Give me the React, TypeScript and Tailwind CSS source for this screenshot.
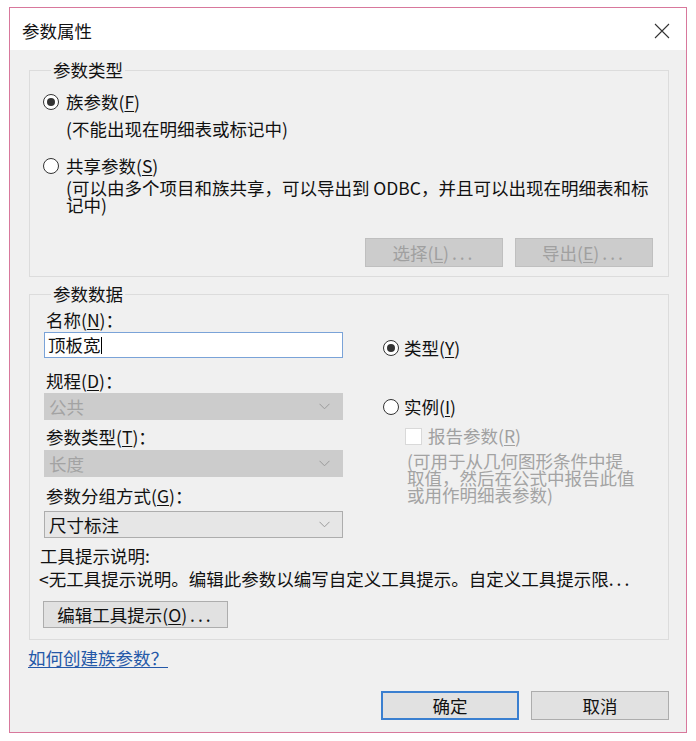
import React from 'react';

const Mn = ({ k }: { k: string }) => (
  <>
    (<span className="underline underline-offset-2">{k}</span>)
  </>
);

function Radio({ checked }: { checked?: boolean }) {
  return (
    <span className="w-[16px] h-[16px] rounded-full border-[1.5px] border-[#333] bg-white flex items-center justify-center shrink-0">
      {checked && <span className="w-[8px] h-[8px] rounded-full bg-[#333]" />}
    </span>
  );
}

function Chevron() {
  return (
    <svg width="11" height="7" viewBox="0 0 11 7" className="shrink-0">
      <path d="M0.5 0.8 L5.5 5.8 L10.5 0.8" fill="none" stroke="#9a9a9a" strokeWidth="1" />
    </svg>
  );
}

function Select({ value, disabled, className = '' }: { value: string; disabled?: boolean; className?: string }) {
  return (
    <div
      className={
        'h-[27px] w-[299px] flex items-center justify-between pl-[4px] pr-[12px] border ' +
        (disabled ? 'bg-[#cccccc] border-[#cccccc] text-[#a3a3a3] ' : 'bg-[#e6e6e6] border-[#adadad] text-[#111] ') +
        className
      }
    >
      <span>{value}</span>
      <Chevron />
    </div>
  );
}

export default function App() {
  return (
    <div className="w-[696px] h-[741px] bg-white pt-[7px] pl-[9px] font-['Noto_Sans_CJK_SC',sans-serif] text-[17.5px] leading-5 text-[#111]">
      <div className="w-[678px] h-[726px] border border-[#d8789c] flex flex-col">
        {/* Title bar */}
        <div className="h-[42px] bg-white flex items-center justify-between pl-[12px] pr-[16px] pt-[3px]">
          <span>参数属性</span>
          <svg width="16" height="16" viewBox="0 0 16 16">
            <path d="M1 1 L15 15 M15 1 L1 15" stroke="#333" strokeWidth="1.1" fill="none" />
          </svg>
        </div>

        {/* Body */}
        <div className="flex-1 bg-[#f0f0f0] pt-[10px] pl-[19px] pr-[17px] pb-[12px] flex flex-col">
          {/* 参数类型 */}
          <fieldset className="border border-[#dcdcdc] pl-[14px] pr-[15px] pt-[12px] pb-[9px]">
            <legend className="ml-[7px] px-[2px] leading-5">参数类型</legend>
            <div className="flex items-center gap-[7px] -ml-[1px] h-5">
              <Radio checked />
              <span>族参数<Mn k="F" /></span>
            </div>
            <div className="mt-[8px] ml-[22px] leading-[17px]">(不能出现在明细表或标记中)</div>
            <div className="mt-[19px] flex items-center gap-[7px] -ml-[1px] h-5">
              <Radio />
              <span>共享参数<Mn k="S" /></span>
            </div>
            <div className="mt-[3px] ml-[22px] leading-[17px] whitespace-nowrap">
              (可以由多个项目和族共享，可以导出到 ODBC，并且可以出现在明细表和标
              <br />
              记中)
            </div>
            <div className="mt-[25px] flex justify-end gap-[12px]">
              <div className="w-[138px] h-[29px] bg-[#cccccc] border border-[#bfbfbf] flex items-center justify-center text-[#a0a0a0]">
                选择<Mn k="L" /><span className="tracking-[3px] ml-[3px]">...</span>
              </div>
              <div className="w-[138px] h-[29px] bg-[#cccccc] border border-[#bfbfbf] flex items-center justify-center text-[#a0a0a0]">
                导出<Mn k="E" /><span className="tracking-[3px] ml-[3px]">...</span>
              </div>
            </div>
          </fieldset>

          {/* 参数数据 */}
          <fieldset className="mt-[7px] border border-[#dcdcdc] pl-[14px] pr-[15px] pt-[6px] pb-[11px]">
            <legend className="ml-[7px] px-[2px] leading-5">参数数据</legend>
            <div className="flex gap-[40px]">
              <div className="w-[299px] flex flex-col">
                <div className="h-5 pl-[2px]">名称<Mn k="N" />：</div>
                <div className="mt-[2px] h-[26px] bg-white border border-[#7aa3d8] flex items-center pl-[3px]">
                  <span>顶板宽</span>
                  <span className="w-px h-[17px] bg-[#000]" />
                </div>
                <div className="mt-[13px] h-5 pl-[2px]">规程<Mn k="D" />：</div>
                <Select className="mt-[2px]" value="公共" disabled />
                <div className="mt-[7px] h-5 pl-[2px]">参数类型<Mn k="T" />：</div>
                <Select className="mt-[3px]" value="长度" disabled />
                <div className="mt-[9px] h-5 pl-[2px]">参数分组方式<Mn k="G" />：</div>
                <Select className="mt-[5px]" value="尺寸标注" />
              </div>
              <div className="flex flex-col">
                <div className="mt-[28px] flex items-center gap-[5px] h-5">
                  <Radio checked />
                  <span>类型<Mn k="Y" /></span>
                </div>
                <div className="mt-[39px] flex items-center gap-[5px] h-5">
                  <Radio />
                  <span>实例<Mn k="I" /></span>
                </div>
                <div className="mt-[10px] ml-[22px] flex items-center gap-[6px] h-[18px] text-[#a0a0a0]">
                  <span className="w-[17px] h-[17px] bg-white border border-[#d9d9d9]" />
                  <span>报告参数<Mn k="R" /></span>
                </div>
                <div className="mt-[7px] ml-[24px] leading-[17px] text-[#a3a3a3] whitespace-nowrap">
                  (可用于从几何图形条件中提
                  <br />
                  取值，然后在公式中报告此值
                  <br />
                  或用作明细表参数)
                </div>
              </div>
            </div>
            <div className="mt-[8px] h-5 -ml-[4px]">工具提示说明:</div>
            <div className="mt-[3px] h-5 -ml-[5px] whitespace-nowrap">
              &lt;无工具提示说明。编辑此参数以编写自定义工具提示。自定义工具提示限<span className="tracking-[3px]">...</span>
            </div>
            <div className="mt-[12px] w-[185px] h-[27px] -ml-[1px] bg-[#e1e1e1] border border-[#adadad] flex items-center justify-center">
              编辑工具提示<Mn k="O" /><span className="tracking-[3px] ml-[3px]">...</span>
            </div>
          </fieldset>

          <div className="mt-[8px] -ml-[1px] h-5">
            <a className="text-[#2458a8] underline underline-offset-2">如何创建族参数？</a>
          </div>

          <div className="mt-auto flex justify-end gap-[12px]">
            <div className="w-[138px] h-[29px] bg-[#e1e1e1] border-2 border-[#3a7fd0] flex items-center justify-center">
              确定
            </div>
            <div className="w-[138px] h-[29px] bg-[#e1e1e1] border border-[#adadad] flex items-center justify-center">
              取消
            </div>
          </div>
        </div>
      </div>
    </div>
  );
}
